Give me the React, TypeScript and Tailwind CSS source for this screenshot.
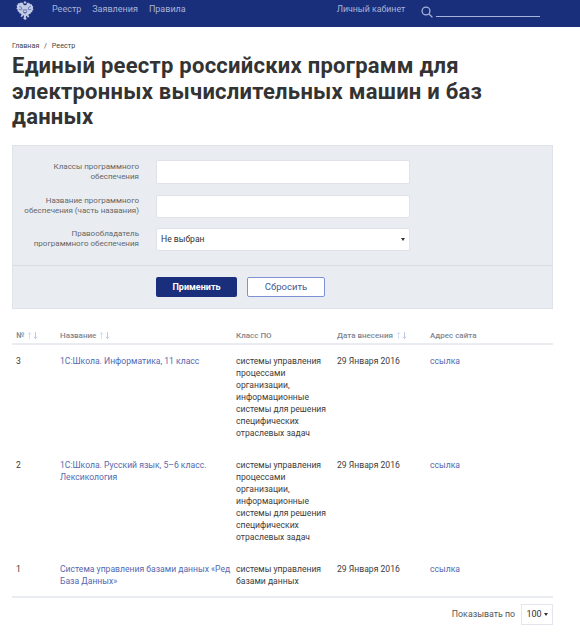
import React from "react";

const rows = [
  {
    id: 3,
    name: "1С:Школа. Информатика, 11 класс",
    cls: "системы управления процессами организации, информационные системы для решения специфических отраслевых задач",
    h: "h-[104px]",
  },
  {
    id: 2,
    name: "1С:Школа. Русский язык, 5–6 класс. Лексикология",
    cls: "системы управления процессами организации, информационные системы для решения специфических отраслевых задач",
    h: "h-[104px]",
  },
  {
    id: 1,
    name: "Система управления базами данных «Ред База Данных»",
    cls: "системы управления базами данных",
    h: "h-[43px]",
  },
];

const Crest = () => (
  <svg width="18" height="19" viewBox="0 0 18 19" fill="#c2cbe6">
    <path d="M9 0l1.400 1.200-.6 1.300H8.200L7.600 1.200z" />
    <path d="M5.500 1.500l1.600.6.400 1.700 1 .5h1l1-.5.400-1.700 1.600-.6.300 1.300 1-.5.800 1.200 1.400-.3.300 1.800 1 .5-.5 1.800.7 1.400-1.200.7-.1 1.700-1.400.4-.4 1.400-1.500.2-.5 1.200 1 1.800-1.500.5-1.600-2-.5 2 1 1.200L9 19l-1.900-1.700 1-1.200-.5-2-1.600 2-1.500-.5 1-1.800-.5-1.200-1.500-.2-.4-1.400L1.700 10.200l-.1-1.700L.4 7.800l.7-1.400L.6 4.600l1-.5.300-1.800 1.400.3.800-1.200 1 .5z" />
    <path d="M3.200 5.500l2 .6.800 3M14.800 5.500l-2 .6-.8 3M2.800 8.300l2.400.6M15.200 8.300l-2.400.6" fill="none" stroke="#4d5f9f" strokeWidth="0.7" />
    <path d="M7.300 8.500h3.400v2.800L9 13l-1.700-1.700z" fill="#5a6ba8" />
    <circle cx="9" cy="10.200" r="0.900" fill="#e6eaf5" />
  </svg>
);

const Arrows = () => (
  <span className="ml-[3px] inline-flex gap-[1px]">
    <svg width="5" height="7" viewBox="0 0 5 8" fill="none" stroke="#c6d2ec" strokeWidth="0.8">
      <path d="M2.500 8V1M.7 2.600l1.800-2 1.800 2" />
    </svg>
    <svg width="5" height="7" viewBox="0 0 5 8" fill="none" stroke="#a3b1da" strokeWidth="0.8">
      <path d="M2.500 0v7M.7 5.400l1.800 2 1.800-2" />
    </svg>
  </span>
);

const Caret = () => (
  <span className="h-0 w-0 border-x-[2.5px] border-t-[3px] border-x-transparent border-t-[#333]" />
);

export default function App() {
  return (
    <div className="h-[640px] w-[580px] overflow-hidden bg-white font-['Roboto',sans-serif] text-[8.6px] leading-[12px] text-[#3c3c3c]">
      {/* Top bar */}
      <header className="flex h-[27px] items-center bg-[#1a2f7c] text-[#a7b3d8]">
        <div className="ml-[16px] flex h-full items-start pt-[1px]">
          <Crest />
        </div>
        <nav className="ml-[18px] flex gap-[11px] pb-[9px] text-[9px]">
          <a>Реестр</a>
          <a>Заявления</a>
          <a>Правила</a>
        </nav>
        <a className="ml-[151px] pb-[9px] text-[8.8px]">Личный кабинет</a>
        <svg className="mb-[3px] ml-[16px]" width="12" height="12" viewBox="0 0 12 12" fill="none" stroke="#a7b3d8" strokeWidth="1.3">
          <circle cx="5" cy="5" r="3.900" />
          <path d="M8 8l3.400 3.400" />
        </svg>
        <div className="ml-[3px] mt-[5px] h-0 w-[104px] border-b border-[#a7b3d8]" />
      </header>

      <main className="ml-[12px] w-[541px]">
        <div className="mt-[14px] text-[7.2px] leading-[9px] text-[#444]">
          Главная <span className="mx-[3px]">/</span> Реестр
        </div>
        <h1 className="mt-[3px] text-[22px] font-bold leading-[25.5px] tracking-[0.25px] text-[#333]">
          Единый реестр российских программ для электронных вычислительных машин и баз данных
        </h1>

        {/* Filter form */}
        <form className="mt-[15px] border border-[#dfe3e9] bg-[#e9edf2]">
          <div className="flex flex-col border-b border-[#d9dde3] py-[14px]">
            <div className="flex h-[24px] items-center">
              <label className="w-[126px] text-right text-[8px] leading-[10px] text-[#666]">Классы программного<br />обеспечения</label>
              <div className="ml-[17px] h-full w-[254px] rounded-[2px] border border-[#dfe3e9] bg-white" />
            </div>
            <div className="mt-[11px] flex h-[23px] items-center">
              <label className="w-[126px] text-right text-[8px] leading-[10px] text-[#666]">Название программного<br />обеспечения (часть названия)</label>
              <div className="ml-[17px] h-full w-[254px] rounded-[2px] border border-[#dfe3e9] bg-white" />
            </div>
            <div className="mt-[10px] flex h-[23px] items-center">
              <label className="w-[126px] text-right text-[8px] leading-[10px] text-[#666]">Правообладатель<br />программного обеспечения</label>
              <div className="ml-[17px] flex h-full w-[254px] items-center justify-between rounded-[2px] border border-[#dfe3e9] bg-white px-[4px] text-[#333]">
                <span>Не выбран</span>
                <Caret />
              </div>
            </div>
          </div>
          <div className="flex h-[42px] items-center pl-[143px]">
            <button type="button" className="h-[20px] w-[81px] rounded-[2px] bg-[#1a2f7c] text-[9px] font-bold text-white">
              Применить
            </button>
            <button type="button" className="ml-[10px] h-[20px] w-[78px] rounded-[2px] border-[1.5px] border-[#7f92d6] bg-white text-[9.5px] text-[#46598f]">
              Сбросить
            </button>
          </div>
        </form>

        {/* Table */}
        <div className="mt-[21px] grid h-[15px] grid-cols-[44px_176px_101px_93px_1fr] border-b-2 border-[#e9edf2] pb-[3px] pl-[4px] text-[8px] font-medium leading-[11px] text-[#7d8590]">
          <div className="flex items-center">№<Arrows /></div>
          <div className="flex items-center">Название<Arrows /></div>
          <div className="flex items-center">Класс ПО</div>
          <div className="flex items-center">Дата внесения<Arrows /></div>
          <div className="flex items-center">Адрес сайта</div>
        </div>
        {rows.map((row) => (
          <div key={row.id} className={`grid grid-cols-[44px_176px_101px_93px_1fr] pl-[4px] pt-[10px] ${row.h}`}>
            <div>{row.id}</div>
            <a className="text-[#5568b0]">{row.name}</a>
            <div className="pr-[6px]">{row.cls}</div>
            <div>29 Января 2016</div>
            <a className="text-[#5568b0]">ссылка</a>
          </div>
        ))}
        <div className="flex items-center justify-end border-t-2 border-[#e9edf2] pt-[6px]">
          <span className="text-[8.8px] text-[#555]">Показывать по</span>
          <div className="ml-[6px] flex h-[21px] w-[32px] items-center justify-center gap-[2px] border border-[#e3e6ec] text-[9px] text-[#333]">
            100 <Caret />
          </div>
        </div>
      </main>
    </div>
  );
}
